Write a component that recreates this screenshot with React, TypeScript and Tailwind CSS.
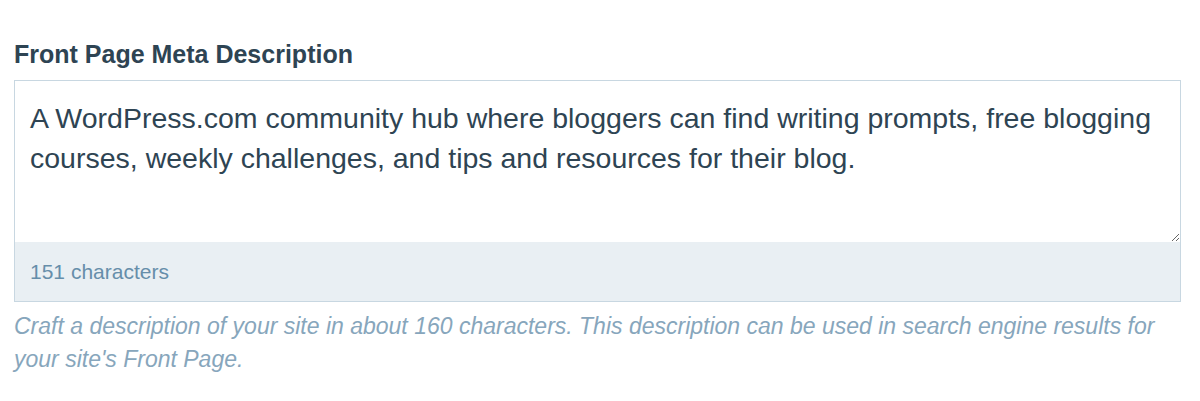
const description =
  "A WordPress.com community hub where bloggers can find writing prompts, free blogging courses, weekly challenges, and tips and resources for their blog.";

const App = () => {
  return (
    <div className="min-h-[401px] bg-white font-['Liberation_Sans',Arial,sans-serif]">
      <div className="pl-[14px] pr-[19px] pt-[39px]">
        <label className="block text-[25px] font-bold leading-[30px] text-[#2e4453] mb-[11px]">
          Front Page Meta Description
        </label>
        <div className="border border-[#c8d7e1]">
          <textarea
            className="block w-full h-[161px] pl-[15px] pr-[12px] pt-[17px] text-[28.5px] leading-[40px] text-[#2e4453] outline-none bg-white"
            defaultValue={description}
          />
          <div className="h-[59px] bg-[#e9eff3] px-[15px] flex items-center text-[21px] text-[#668eaa]">
            {description.length} characters
          </div>
        </div>
        <p className="mt-[8px] text-[23px] italic leading-[33px] text-[#87a6bc]">
          Craft a description of your site in about 160 characters. This description can be used in search engine
          results for your site's Front Page.
        </p>
      </div>
    </div>
  );
};

export default App;
